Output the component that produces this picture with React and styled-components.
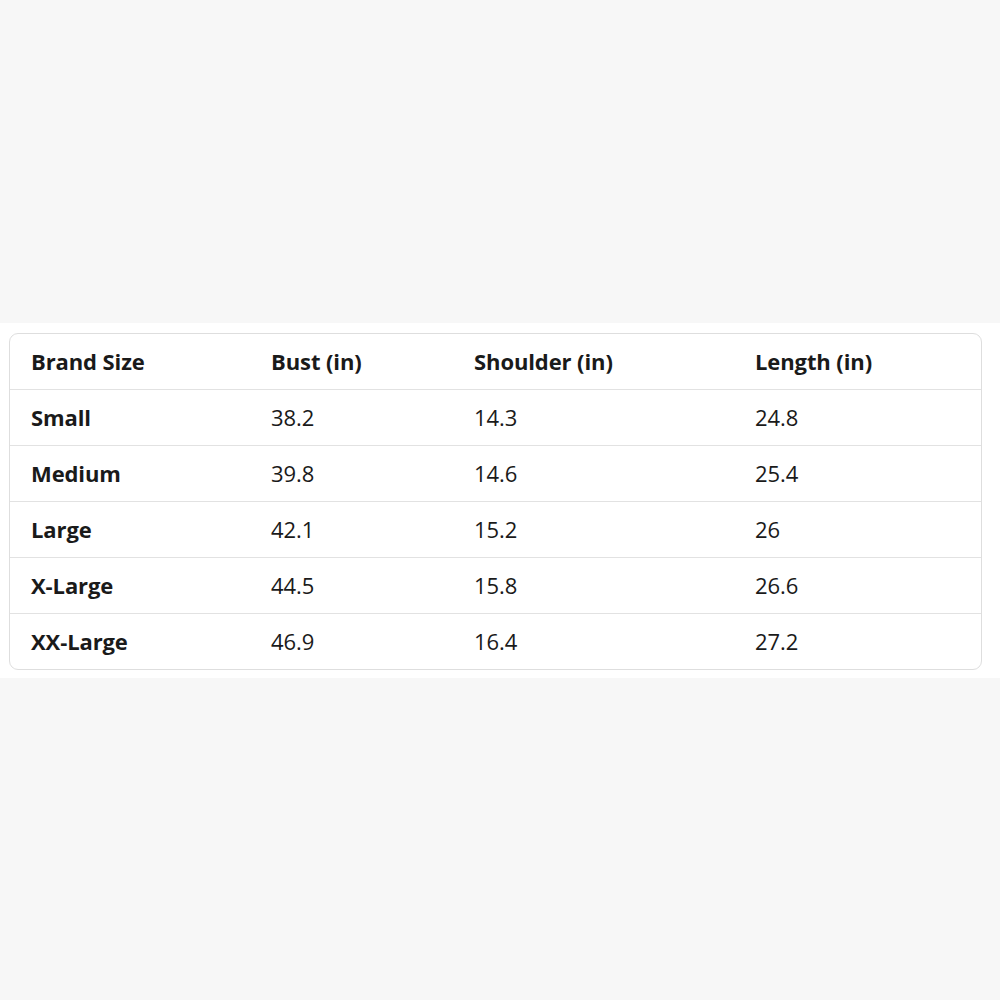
import React from "react";
import styled, { createGlobalStyle } from "styled-components";

const Global = createGlobalStyle`
  html, body {
    margin: 0;
    padding: 0;
    background: #f7f7f7;
  }
  body {
    font-family: "Open Sans", "Noto Sans", sans-serif;
  }
  * {
    box-sizing: border-box;
  }
`;

const Page = styled.div`
  width: 1000px;
  height: 1000px;
  display: flex;
  flex-direction: column;
  justify-content: center;
`;

const Band = styled.section`
  background: #fff;
  padding: 10px 18px 8px 9px;
`;

const Table = styled.div`
  border: 1px solid #dedede;
  border-radius: 9px;
  overflow: hidden;
  background: #fff;
`;

const Row = styled.div`
  display: grid;
  grid-template-columns: 240px 203px 281px 1fr;
  height: ${(p) => (p.first ? "55px" : "56px")};
  align-items: center;
  border-top: ${(p) => (p.first ? "none" : "1px solid #e2e2e2")};
`;

const Cell = styled.div`
  padding-left: 21px;
  font-size: 22px;
  color: #1a1a1a;
  font-weight: ${(p) => (p.bold ? 700 : 400)};
  letter-spacing: -0.1px;
`;

const header = ["Brand Size", "Bust (in)", "Shoulder (in)", "Length (in)"];

const rows = [
  ["Small", "38.2", "14.3", "24.8"],
  ["Medium", "39.8", "14.6", "25.4"],
  ["Large", "42.1", "15.2", "26"],
  ["X-Large", "44.5", "15.8", "26.6"],
  ["XX-Large", "46.9", "16.4", "27.2"],
];

const App = () => (
  <Page>
    <Global />
    <Band>
      <Table>
        <Row first>
          {header.map((h) => (
            <Cell key={h} bold>
              {h}
            </Cell>
          ))}
        </Row>
        {rows.map((r) => (
          <Row key={r[0]}>
            {r.map((v, i) => (
              <Cell key={i} bold={i === 0}>
                {v}
              </Cell>
            ))}
          </Row>
        ))}
      </Table>
    </Band>
  </Page>
);

export default App;
